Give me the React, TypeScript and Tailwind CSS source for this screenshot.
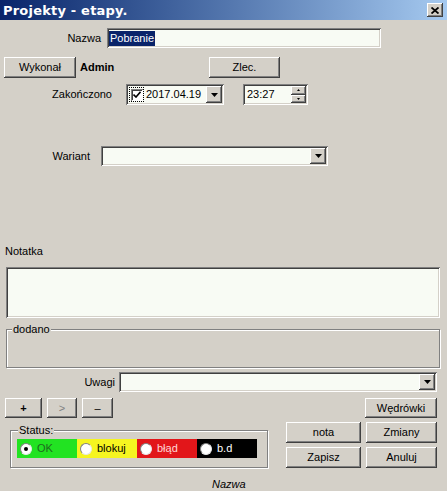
import React from "react"

const raised =
  "bg-[#d4d0c8] shadow-[inset_-1px_-1px_0_#404040,inset_1px_1px_0_#ffffff,inset_-2px_-2px_0_#808080,inset_2px_2px_0_#d4d0c8]"
const sunken =
  "bg-[#f8fbf4] shadow-[inset_1px_1px_0_#808080,inset_-1px_-1px_0_#ffffff,inset_2px_2px_0_#404040,inset_-2px_-2px_0_#d4d0c8]"
const etched = "border border-[#808080] shadow-[inset_1px_1px_0_#ffffff,1px_1px_0_#ffffff]"

function Btn({ label, className = "" }: { label: string; className?: string }) {
  return (
    <div className={`${raised} flex items-center justify-center ${className}`}>
      <span>{label}</span>
    </div>
  )
}

function Arrow() {
  return (
    <svg width="7" height="4" viewBox="0 0 7 4">
      <path d="M0 0h7L3.5 4z" fill="#000" />
    </svg>
  )
}

function Combo({ className = "" }: { className?: string }) {
  return (
    <div className={`${sunken} flex items-center justify-end p-[2px] ${className}`}>
      <div className={`${raised} flex h-full w-[16px] items-center justify-center`}>
        <Arrow />
      </div>
    </div>
  )
}

function Radio({ checked = false }: { checked?: boolean }) {
  return (
    <div className="box-border flex h-[12px] w-[12px] shrink-0 items-center justify-center rounded-full border border-[#808080] border-r-[#e8e8e8] border-b-[#e8e8e8] bg-white">
      {checked && <div className="h-[4px] w-[4px] rounded-full bg-black" />}
    </div>
  )
}

function StatusCell({ label, bg, text, checked }: { label: string; bg: string; text: string; checked?: boolean }) {
  return (
    <div className={`flex h-[19px] w-[60px] items-center gap-[5px] pl-[3px] ${bg} ${text}`}>
      <Radio checked={checked} />
      <span>{label}</span>
    </div>
  )
}

export default function App() {
  return (
    <div className="h-[491px] w-[447px] overflow-hidden bg-[#d4d0c8] font-['Liberation_Sans',Arial,sans-serif] text-[11px] leading-none text-black">
      {/* title bar */}
      <div className="flex h-[20px] items-center justify-between bg-gradient-to-r from-[#0a246a] to-[#a6caf0] pl-[3px] pr-[4px]">
        <span className="font-['DejaVu_Sans',sans-serif] text-[13px] font-bold tracking-[0.2px] text-white">
          Projekty - etapy.
        </span>
        <div className={`${raised} flex h-[14px] w-[16px] items-center justify-center`}>
          <svg width="8" height="7" viewBox="0 0 8 7">
            <path d="M0.5 0.5L7.5 6.5M7.5 0.5L0.5 6.5" stroke="#000" strokeWidth="1.8" />
          </svg>
        </div>
      </div>

      {/* Nazwa */}
      <div className="mt-[8px] flex h-[20px] items-center">
        <span className="w-[101px] text-right">Nazwa</span>
        <div className={`${sunken} ml-[6px] flex h-[20px] w-[274px] items-center pl-[2px]`}>
          <span className="bg-[#0a246a] px-[1px] py-[2px] text-white">Pobranie</span>
        </div>
      </div>

      {/* Wykonał / Admin / Zlec. */}
      <div className="mt-[9px] flex h-[21px] items-center">
        <Btn label="Wykonał" className="ml-[4px] h-[21px] w-[72px]" />
        <span className="ml-[4px] w-[129px] font-bold">Admin</span>
        <Btn label="Zlec." className="h-[21px] w-[71px]" />
      </div>

      {/* Zakończono */}
      <div className="mt-[6px] flex h-[21px] items-center">
        <span className="w-[112px] text-right">Zakończono</span>
        <div className={`${sunken} ml-[14px] flex h-[21px] w-[98px] items-center p-[2px]`}>
          <div className="ml-[1px] flex h-[15px] w-[15px] shrink-0 items-center justify-center outline-1 outline-dotted outline-black -outline-offset-1">
            <div className="flex h-[12px] w-[12px] items-center justify-center bg-white shadow-[inset_1px_1px_0_#808080,inset_-1px_-1px_0_#ffffff,inset_2px_2px_0_#404040]">
              <svg width="8" height="7" viewBox="0 0 8 7">
                <path d="M0.5 3.5L3 6L7.5 0.8" stroke="#000" strokeWidth="1.6" fill="none" />
              </svg>
            </div>
          </div>
          <span className="ml-[2px]">2017.04.19</span>
          <div className={`${raised} ml-auto flex h-full w-[16px] items-center justify-center`}>
            <Arrow />
          </div>
        </div>
        <div className={`${sunken} ml-[19px] flex h-[21px] w-[65px] items-center p-[2px]`}>
          <span className="ml-[2px]">23:27</span>
          <div className="ml-auto flex h-full w-[15px] flex-col">
            <div className={`${raised} flex flex-1 items-center justify-center`}>
              <svg width="3" height="2" viewBox="0 0 3 2">
                <path d="M0 2h3L1.5 0z" fill="#000" />
              </svg>
            </div>
            <div className={`${raised} flex flex-1 items-center justify-center`}>
              <svg width="3" height="2" viewBox="0 0 3 2">
                <path d="M0 0h3L1.5 2z" fill="#000" />
              </svg>
            </div>
          </div>
        </div>
      </div>

      {/* Wariant */}
      <div className="mt-[41px] flex h-[20px] items-center">
        <span className="w-[90px] text-right">Wariant</span>
        <Combo className="ml-[11px] h-[20px] w-[227px]" />
      </div>

      {/* Notatka */}
      <div className="mt-[80px] pl-[5px]">Notatka</div>
      <div className={`${sunken} ml-[6px] mt-[10px] h-[51px] w-[434px]`} />

      {/* dodano */}
      <div className={`${etched} relative ml-[6px] mt-[11px] h-[39px] w-[434px]`}>
        <span className="absolute -top-[6px] left-[5px] bg-[#d4d0c8] px-[1px]">dodano</span>
      </div>

      {/* Uwagi */}
      <div className="mt-[4px] flex h-[20px] items-center">
        <span className="w-[115px] text-right">Uwagi</span>
        <Combo className="ml-[4px] h-[20px] w-[318px]" />
      </div>

      {/* + > - / Wędrówki */}
      <div className="mt-[6px] flex h-[20px] items-center">
        <Btn label="+" className="ml-[5px] h-[20px] w-[37px] font-bold" />
        <Btn label=">" className="ml-[5px] h-[20px] w-[30px] text-[#808080]" />
        <Btn label="–" className="ml-[5px] h-[20px] w-[31px]" />
        <Btn label="Wędrówki" className="ml-auto mr-[10px] h-[20px] w-[72px]" />
      </div>

      {/* Status + buttons */}
      <div className="mt-[4px] flex">
        <div className={`${etched} relative ml-[10px] mt-[8px] h-[38px] w-[258px]`}>
          <span className="absolute -top-[6px] left-[7px] bg-[#d4d0c8] px-[1px]">Status:</span>
          <div className="ml-[6px] mt-[8px] flex">
            <StatusCell label="OK" bg="bg-[#22e322]" text="text-[#1f6a1f]" checked />
            <StatusCell label="blokuj" bg="bg-[#f6f520]" text="text-black" />
            <StatusCell label="błąd" bg="bg-[#e2161a]" text="text-[#ffd8d8]" />
            <StatusCell label="b.d" bg="bg-black" text="text-white" />
          </div>
        </div>
        <div className="ml-auto mr-[10px] grid grid-cols-[75px_71px] gap-x-[5px] gap-y-[3px]">
          <Btn label="nota" className="h-[21px]" />
          <Btn label="Zmiany" className="h-[21px]" />
          <Btn label="Zapisz" className="h-[21px]" />
          <Btn label="Anuluj" className="h-[21px]" />
        </div>
      </div>

      <div className="mt-[11px] pl-[212px] italic">Nazwa</div>
    </div>
  )
}
